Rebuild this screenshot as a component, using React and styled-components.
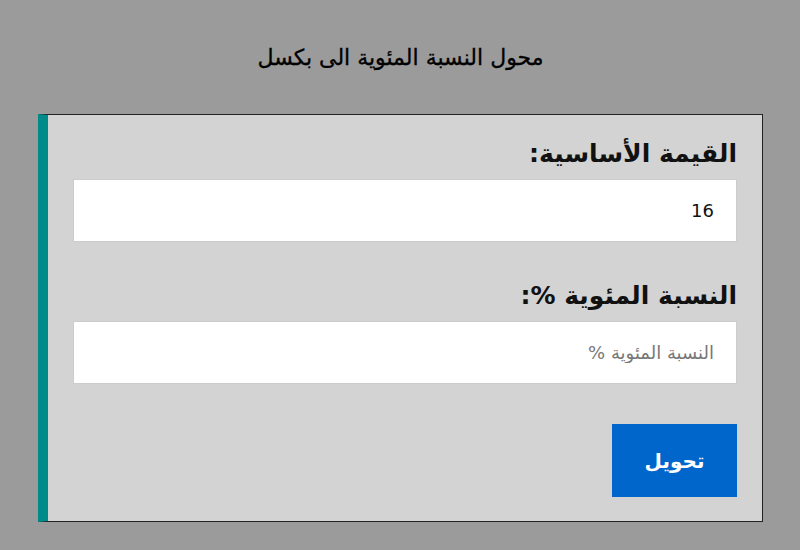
import styled, { createGlobalStyle } from "styled-components";

const GlobalStyle = createGlobalStyle`
  html, body {
    margin: 0;
    padding: 0;
    background: #9b9b9b;
  }
  body {
    direction: rtl;
  }
`

const Page = styled.div`
  width: 800px;
  height: 550px;
  box-sizing: border-box;
  padding: 40px 37px 0 38px;
`

const Title = styled.h1`
  margin: 0 0 38px;
  font-family: "DejaVu Sans", sans-serif;
  font-weight: normal;
  font-size: 22px;
  line-height: 36px;
  text-align: center;
  color: #000;
  -webkit-text-stroke: 0.3px #000;
`

const Card = styled.div`
  background: #d3d3d3;
  border: 1px solid #222;
  border-left: 10px solid #008b8b;
  padding: 25px 25px 24px 25px;
  display: flex;
  flex-direction: column;
  gap: 40px;
`

const Field = styled.div`
  display: flex;
  flex-direction: column;
`

const Label = styled.label`
  font-family: "DejaVu Sans", sans-serif;
  font-weight: bold;
  font-size: 25px;
  line-height: 28px;
  color: #111;
  margin-bottom: 11px;
`

const Input = styled.input`
  height: 63px;
  box-sizing: border-box;
  border: 1px solid #ccc;
  background: #fff;
  padding: 0 22px;
  font-family: "DejaVu Sans", sans-serif;
  font-size: 18px;
  color: #111;
  direction: rtl;
  outline: none;
  &::placeholder {
    color: #777;
  }
`

const Actions = styled.div`
  display: flex;
`

const Button = styled.button`
  width: 125px;
  height: 73px;
  border: none;
  background: #0066cc;
  color: #fff;
  font-family: "DejaVu Sans", sans-serif;
  font-weight: bold;
  font-size: 20px;
  cursor: pointer;
`

export default function App(){
    return <Page>
        <GlobalStyle/>
        <Title>محول النسبة المئوية الى بكسل</Title>
        <Card>
            <Field>
                <Label>القيمة الأساسية:</Label>
                <Input defaultValue="16"/>
            </Field>
            <Field>
                <Label>النسبة المئوية %:</Label>
                <Input placeholder="النسبة المئوية %"/>
            </Field>
            <Actions>
                <Button>تحويل</Button>
            </Actions>
        </Card>
    </Page>
}
